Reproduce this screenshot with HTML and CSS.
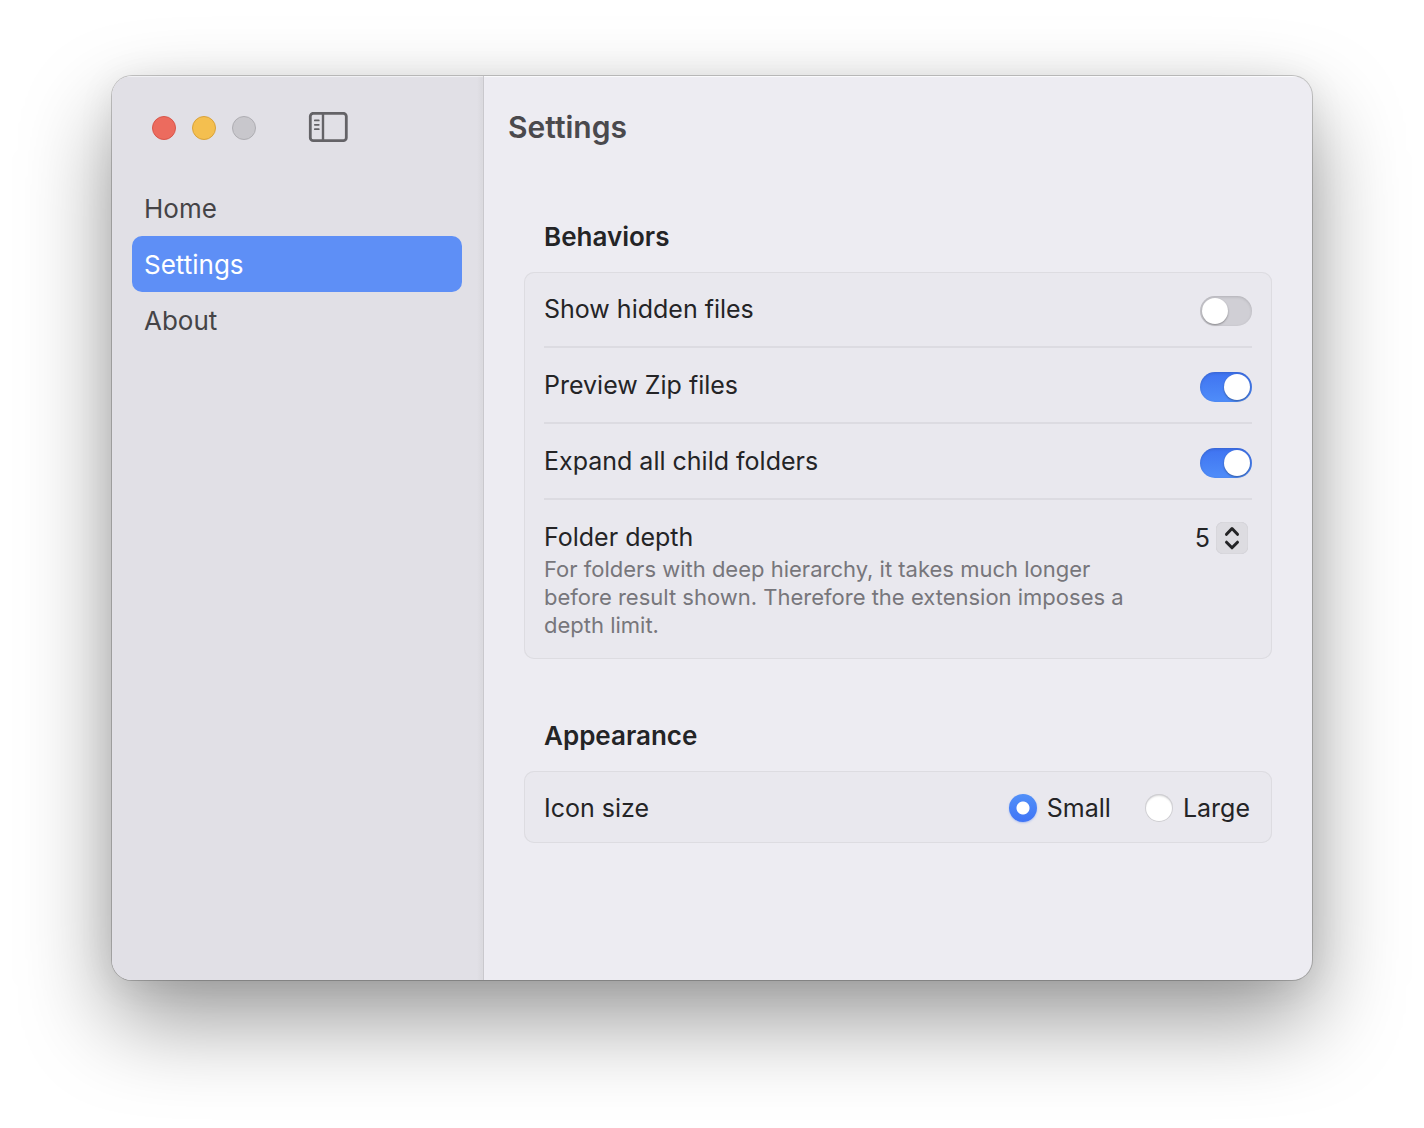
FILE: index.html
```html
<!DOCTYPE html>
<html lang="en">
<head>
    <meta charset="UTF-8">
    <meta name="viewport" content="width=device-width, initial-scale=1.0">
    <title>Settings</title>
    <link rel="stylesheet" href="styles.css">
</head>
<body>
    <div class="window">
        <aside class="sidebar">
            <div class="titlebar">
                <div class="traffic-lights">
                    <button class="light close" aria-label="Close"></button>
                    <button class="light minimize" aria-label="Minimize"></button>
                    <button class="light zoom" aria-label="Zoom" disabled></button>
                </div>
                <button class="sidebar-toggle" aria-label="Toggle sidebar">
                    <svg width="40" height="32" viewBox="0 0 40 32" fill="none" stroke="#646367">
                        <rect x="2.3" y="1.3" width="36" height="27.4" rx="3" stroke-width="2.8"/>
                        <path d="M15 1.5v27" stroke-width="2.4"/>
                        <path d="M6.8 8.4h4M6.8 12.8h4M6.8 17.2h4" stroke-width="1.7" stroke-linecap="round"/>
                    </svg>
                </button>
            </div>
            <nav class="nav">
                <a href="#home">Home</a>
                <a href="#settings" class="active">Settings</a>
                <a href="#about">About</a>
            </nav>
        </aside>

        <main class="main">
            <header class="header">
                <h1>Settings</h1>
            </header>

            <div class="content">
                <section>
                    <h2>Behaviors</h2>
                    <div class="card">
                        <div class="row">
                            <label for="hidden">Show hidden files</label>
                            <input type="checkbox" class="switch" id="hidden">
                        </div>
                        <div class="row">
                            <label for="zip">Preview Zip files</label>
                            <input type="checkbox" class="switch" id="zip" checked>
                        </div>
                        <div class="row">
                            <label for="expand">Expand all child folders</label>
                            <input type="checkbox" class="switch" id="expand" checked>
                        </div>
                        <div class="row row-depth">
                            <div class="depth-text">
                                <label for="depth">Folder depth</label>
                                <p>For folders with deep hierarchy, it takes much longer before result shown. Therefore the extension imposes a depth limit.</p>
                            </div>
                            <div class="depth-control">
                                <input type="number" id="depth" value="5" min="1" max="9">
                                <div class="stepper">
                                    <button aria-label="Increase" onclick="depth.stepUp()">
                                        <svg width="32" height="16" viewBox="0 0 32 16"><path d="M10.5 12.3L16 6.5l5.5 5.8"/></svg>
                                    </button>
                                    <button aria-label="Decrease" onclick="depth.stepDown()">
                                        <svg width="32" height="16" viewBox="0 0 32 16"><path d="M10.5 4.2L16 9.8l5.5-5.6"/></svg>
                                    </button>
                                </div>
                            </div>
                        </div>
                    </div>
                </section>

                <section>
                    <h2>Appearance</h2>
                    <div class="card">
                        <div class="row row-single">
                            <span id="iconSize">Icon size</span>
                            <div class="radio-group" role="radiogroup" aria-labelledby="iconSize">
                                <label><input type="radio" name="size" checked>Small</label>
                                <label><input type="radio" name="size">Large</label>
                            </div>
                        </div>
                    </div>
                </section>
            </div>
        </main>
    </div>

    <script>
        const depth = document.getElementById('depth');
    </script>
</body>
</html>
```
FILE: styles.css
```css
* {
    box-sizing: border-box;
}

body {
    margin: 0;
    padding: 76px 112px 148px;
    background-color: #fff;
    font-family: Inter, "Liberation Sans", sans-serif;
    font-size: 25px;
    line-height: 30px;
    color: #242426;
}

h1, h2, p {
    margin: 0;
}

button {
    padding: 0;
    border: none;
    background: none;
}

input {
    appearance: none;
    margin: 0;
    flex: none;
}

.window {
    display: flex;
    min-height: calc(100vh - 224px);
    border-radius: 20px;
    overflow: hidden;
    background-color: #edecf2;
    box-shadow: 0 0 0 1px rgba(0, 0, 0, 0.2), 0 40px 90px rgba(0, 0, 0, 0.4), 0 4px 36px rgba(0, 0, 0, 0.08);
}

/* sidebar */
.sidebar {
    flex: none;
    width: 372px;
    background: linear-gradient(to left, #d9d8dd, #e1e0e6 6px);
    border-right: 1px solid #c9c8cd;
    box-shadow: inset 0 1px 1px rgba(255, 255, 255, 0.6);
}

.titlebar {
    display: flex;
    align-items: center;
    gap: 52px;
    height: 104px;
    padding-left: 40px;
}

.traffic-lights {
    display: flex;
    gap: 16px;
}

.light {
    width: 24px;
    height: 24px;
    border-radius: 50%;
}

.close {
    background-color: #ec6b5e;
    border: 1px solid #d8564a;
}

.minimize {
    background-color: #f4bf4f;
    border: 1px solid #d9a23a;
}

.zoom {
    background-color: #c8c7cc;
    border: 1px solid #aeadb2;
}

.sidebar-toggle svg {
    display: block;
}

.nav {
    padding: 0 21px 0 20px;
}

.nav a {
    display: block;
    padding: 15px 12px 13px;
    font-size: 26px;
    line-height: 28px;
    border-radius: 10px;
    color: #454447;
    text-decoration: none;
}

.nav a.active {
    background-color: #5e8ff6;
    color: #fff;
}

/* main pane */
.main {
    flex: 1;
    min-width: 0;
    box-shadow: inset 0 1px 1px rgba(255, 255, 255, 0.8);
}

.header {
    display: flex;
    align-items: center;
    height: 104px;
    padding: 0 24px 2px;
}

h1 {
    font-size: 30px;
    font-weight: 600;
    color: #4a494d;
}

h2 {
    margin-bottom: 20px;
    padding: 0 20px;
    font-size: 26px;
    font-weight: 600;
}

.content {
    display: flex;
    flex-direction: column;
    gap: 62px;
    padding: 42px 40px;
}

.card {
    padding: 0 20px;
    border-radius: 10px;
    background-color: #e9e8ee;
    box-shadow: inset 0 0 0 1px #dddce1, inset 0 0 2px rgba(0, 0, 0, 0.04);
}

.row {
    display: flex;
    justify-content: space-between;
    align-items: flex-end;
    padding: 22px 0 20px;
    border-bottom: 2px solid #dcdbe1;
}

.row:last-child {
    border-bottom: none;
}

.row > label {
    padding-bottom: 2px;
}

.switch {
    width: 52px;
    height: 30px;
    padding: 2px;
    border-radius: 15px;
    background-color: #d0cfd5;
    box-shadow: inset 0 1px 3px rgba(0, 0, 0, 0.15);
}

.switch::before {
    content: "";
    display: block;
    width: 26px;
    height: 26px;
    border-radius: 50%;
    background-color: #fff;
    box-shadow: 0 1px 2px rgba(0, 0, 0, 0.35);
}

.switch:checked {
    padding-left: 24px;
    background: linear-gradient(#3f73f1, #4f8df9);
}

.row-depth {
    align-items: flex-start;
    padding: 20px 0;
}

.depth-text {
    max-width: 600px;
}

.depth-text label {
    display: block;
    line-height: 35px;
}

.depth-text p {
    font-size: 22px;
    line-height: 28px;
    color: #77767b;
}

.depth-control {
    display: flex;
    align-items: center;
    gap: 6px;
    padding: 2px 4px 0 0;
}

.depth-control input {
    width: 32px;
    height: 30px;
    padding: 0;
    border: none;
    background: none;
    font: inherit;
    color: inherit;
    text-align: right;
    appearance: textfield;
}

.depth-control input::-webkit-inner-spin-button {
    appearance: none;
    margin: 0;
}

.stepper {
    width: 32px;
    height: 32px;
    border-radius: 7px;
    background-color: #dddce1;
    box-shadow: inset 0 0 1px rgba(0, 0, 0, 0.2);
}

.stepper button,
.stepper svg {
    display: block;
}

.stepper path {
    fill: none;
    stroke: #242426;
    stroke-width: 3;
    stroke-linecap: round;
    stroke-linejoin: round;
}

.radio-group {
    display: flex;
    gap: 34px;
    padding-right: 2px;
}

.radio-group label {
    display: flex;
    align-items: center;
    gap: 10px;
}

.radio-group input {
    width: 28px;
    height: 28px;
    border-radius: 50%;
    background-color: #fff;
    box-shadow: inset 0 0 0 1px #cfced3, inset 0 2px 2px rgba(0, 0, 0, 0.15);
}

.radio-group input:checked {
    background: radial-gradient(circle, #fff 6px, transparent 7px), linear-gradient(#5290f8, #3f74f6);
    box-shadow: 0 1px 2px rgba(63, 116, 246, 0.35);
}
```
